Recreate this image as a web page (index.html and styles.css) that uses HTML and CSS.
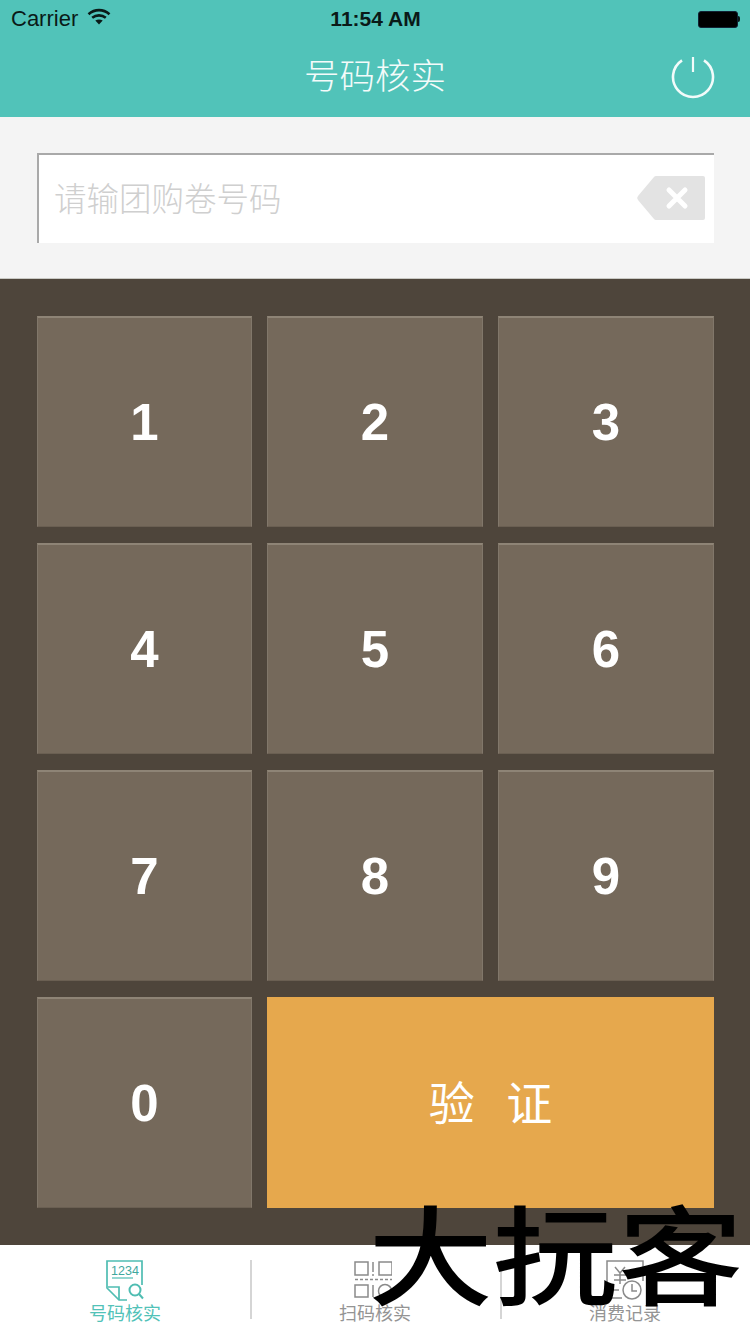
FILE: index.html
```html
<!DOCTYPE html>
<html lang="zh-CN">
<head>
<meta charset="utf-8">
<title>号码核实</title>
<link rel="stylesheet" href="styles.css">
</head>
<body>
<div class="app">
  <header class="top">
    <div class="status">
      <div class="status-left">
        <span>Carrier</span>
        <svg class="wifi" viewBox="0 0 24 17" width="24" height="17"><path d="M1.500 6.200C7.800.8 16.200.8 22.500 6.200" fill="none" stroke="#0a1a18" stroke-width="2.600"/><path d="M5.200 9.800c4-3.300 9.600-3.300 13.600 0" fill="none" stroke="#0a1a18" stroke-width="2.600"/><path d="M8.300 12.600c2.200-1.600 5.200-1.600 7.400 0L12 16.600z" fill="#0a1a18"/></svg>
      </div>
      <div class="clock">11:54 AM</div>
      <div class="status-right">
        <span class="battery"></span><span class="battery-tip"></span>
      </div>
    </div>
    <div class="nav">
      <h1 class="nav-title">号码核实</h1>
      <svg class="power" viewBox="0 0 44 44" width="44" height="44"><path d="M11 5.300A20 20 0 1 0 33 5.300" fill="none" stroke="#f2fbfa" stroke-width="2.600"/><path d="M22 2v15" fill="none" stroke="#f2fbfa" stroke-width="2.200"/></svg>
    </div>
  </header>

  <section class="entry">
    <div class="field">
      <span class="placeholder">请输团购卷号码</span>
      <svg class="clear" viewBox="0 0 70 46" width="70" height="46"><path d="M20 1h47a2 2 0 0 1 2 2v40a2 2 0 0 1-2 2H20a3 3 0 0 1-2-1L2 25a3 3 0 0 1 0-4L18 2a3 3 0 0 1 2-1z" fill="#e3e3e3"/><path d="M33 15l16 16M49 15L33 31" stroke="#fff" stroke-width="5" stroke-linecap="round"/></svg>
    </div>
  </section>

  <section class="pad">
    <button class="key">1</button>
    <button class="key">2</button>
    <button class="key">3</button>
    <button class="key">4</button>
    <button class="key">5</button>
    <button class="key">6</button>
    <button class="key">7</button>
    <button class="key">8</button>
    <button class="key">9</button>
    <button class="key">0</button>
    <button class="verify">验 证</button>
  </section>

  <nav class="tabs">
    <div class="tab tab-active">
      <svg class="tab-icon" viewBox="0 0 38 42" width="38" height="42" fill="none" stroke="#4fbdb2" stroke-width="1.700">
        <path d="M36 25V1H1v27l12 12h8"/>
        <text class="icon-num" x="19" y="15" text-anchor="middle">1234</text>
        <path d="M6 18h21" stroke-width="1.200"/>
        <path d="M2 27h11v13"/>
        <circle cx="29" cy="30" r="5.500" stroke-width="2"/>
        <path d="M33 34l4 4.500" stroke-width="2"/>
      </svg>
      <span class="tab-label">号码核实</span>
    </div>
    <div class="tab tab-divided">
      <svg class="tab-icon tab-icon-shifted" viewBox="0 0 38 42" width="38" height="42" fill="none" stroke="#8a8a8a" stroke-width="1.500">
        <rect x="1" y="2" width="13" height="13"/>
        <path d="M19 2v10M19 14v2"/>
        <path d="M25 2h13v13H25z"/>
        <path d="M1 19.500h37" stroke-dasharray="3 2"/>
        <rect x="1" y="25" width="13" height="12"/>
        <path d="M19 25v12"/>
        <circle cx="31" cy="31" r="6.500"/>
      </svg>
      <span class="tab-label">扫码核实</span>
    </div>
    <div class="tab tab-divided">
      <svg class="tab-icon" viewBox="0 0 38 42" width="38" height="42" fill="none" stroke="#8a8a8a" stroke-width="1.500">
        <path d="M16 38H1V1h36v20"/>
        <path d="M9 7l5 6 5-6M14 13v11M8 15h12M8 20h12M6 30h7"/>
        <circle cx="26" cy="30" r="9"/>
        <path d="M26 24v7h5"/>
      </svg>
      <span class="tab-label">消费记录</span>
    </div>
  </nav>

  <div class="watermark">大抏客</div>
</div>
</body>
</html>
```
FILE: styles.css
```css
* {
  box-sizing: border-box;
}

html,
body {
  margin: 0;
  padding: 0;
}

body {
  width: 750px;
  height: 1334px;
  overflow: hidden;
  font-family: "Liberation Sans", "Noto Sans CJK SC", sans-serif;
}

.app {
  position: relative;
  width: 750px;
  height: 1334px;
  display: flex;
  flex-direction: column;
  background: #f4f4f4;
  overflow: hidden;
}

.top {
  height: 117px;
  background: #51c3b9;
  flex: none;
}

.status {
  height: 40px;
  display: grid;
  grid-template-columns: 1fr auto 1fr;
  align-items: center;
  padding: 0 10px 2px 11px;
  color: #0a1a18;
}

.status-left {
  display: flex;
  align-items: center;
  gap: 9px;
  font-size: 22px;
}

.wifi {
  margin-top: -5px;
}

.clock {
  font-size: 21px;
  font-weight: 700;
}

.status-right {
  display: flex;
  align-items: center;
  justify-content: flex-end;
}

.battery {
  width: 40px;
  height: 17px;
  background: #000;
  border: 1px solid #123;
  border-radius: 3px;
}

.battery-tip {
  width: 2px;
  height: 6px;
  background: #0a1a18;
  border-radius: 0 2px 2px 0;
}

.nav {
  height: 77px;
  display: flex;
  align-items: center;
  justify-content: center;
  position: relative;
}

.nav-title {
  margin: -9px 0 0;
  font-family: "Noto Sans CJK SC", sans-serif;
  font-size: 35.500px;
  font-weight: 300;
  line-height: 1.2;
  color: #f4fbfa;
}

.power {
  position: absolute;
  right: 35px;
  top: 15px;
}

.entry {
  height: 162px;
  padding: 36px 36px 0 37px;
  flex: none;
  border-bottom: 1px solid #c9c9c4;
}

.field {
  height: 90px;
  display: flex;
  align-items: center;
  justify-content: space-between;
  padding: 0 8px 3px 15px;
  background: #fff;
  border-top: 2px solid #a9a9a9;
  border-left: 2px solid #a9a9a9;
}

.placeholder {
  font-family: "Noto Sans CJK SC", sans-serif;
  font-size: 32.500px;
  font-weight: 300;
  line-height: 1;
  color: #cfcfcf;
}

.pad {
  height: 966px;
  flex: none;
  display: grid;
  grid-template-columns: 215px 216px 216px;
  grid-template-rows: repeat(4, 211px);
  column-gap: 15px;
  row-gap: 16px;
  padding: 37px 36px 0 37px;
  background: #4e453b;
}

.key,
.verify {
  border: 0;
  padding: 0;
  margin: 0;
  cursor: pointer;
}

.key {
  background: #75695b;
  border-top: 2px solid #8e8476;
  border-left: 1px solid #81776a;
  border-right: 1px solid #81776a;
  border-bottom: 1px solid #6a5f52;
  color: #fff;
  font-family: "Liberation Sans", sans-serif;
  font-size: 51px;
  font-weight: 700;
}

.verify {
  grid-column: span 2;
  padding-bottom: 6px;
  background: #e6a84d;
  color: #fff;
  font-family: "Noto Sans CJK SC", sans-serif;
  font-size: 46px;
  font-weight: 400;
  word-spacing: 21px;
}

.tabs {
  flex: 1;
  display: grid;
  grid-template-columns: 250px 250px 250px;
  background: #fff;
  padding-top: 15px;
}

.tab {
  display: flex;
  flex-direction: column;
  align-items: center;
  height: 59px;
}

.tab-divided {
  border-left: 2px solid #d5d5d5;
  padding-right: 2px;
}

.tab-icon {
  flex: none;
  margin-bottom: 1px;
}

.tab-icon-shifted {
  margin-right: 4px;
}

.icon-num {
  font-family: "Liberation Sans", sans-serif;
  font-size: 12.500px;
  fill: #3fa89e;
  stroke: none;
}

.tab-label {
  font-family: "Noto Sans CJK SC", sans-serif;
  font-size: 18px;
  line-height: 18px;
  color: #949494;
}

.tab-active .tab-label {
  color: #52c2b8;
}

.watermark {
  position: absolute;
  left: 368px;
  top: 1196px;
  font-family: "Noto Sans CJK SC", sans-serif;
  font-size: 125px;
  font-weight: 500;
  line-height: 1;
  color: #000;
  white-space: nowrap;
  transform: scaleY(0.86);
  transform-origin: left top;
  pointer-events: none;
}
```
